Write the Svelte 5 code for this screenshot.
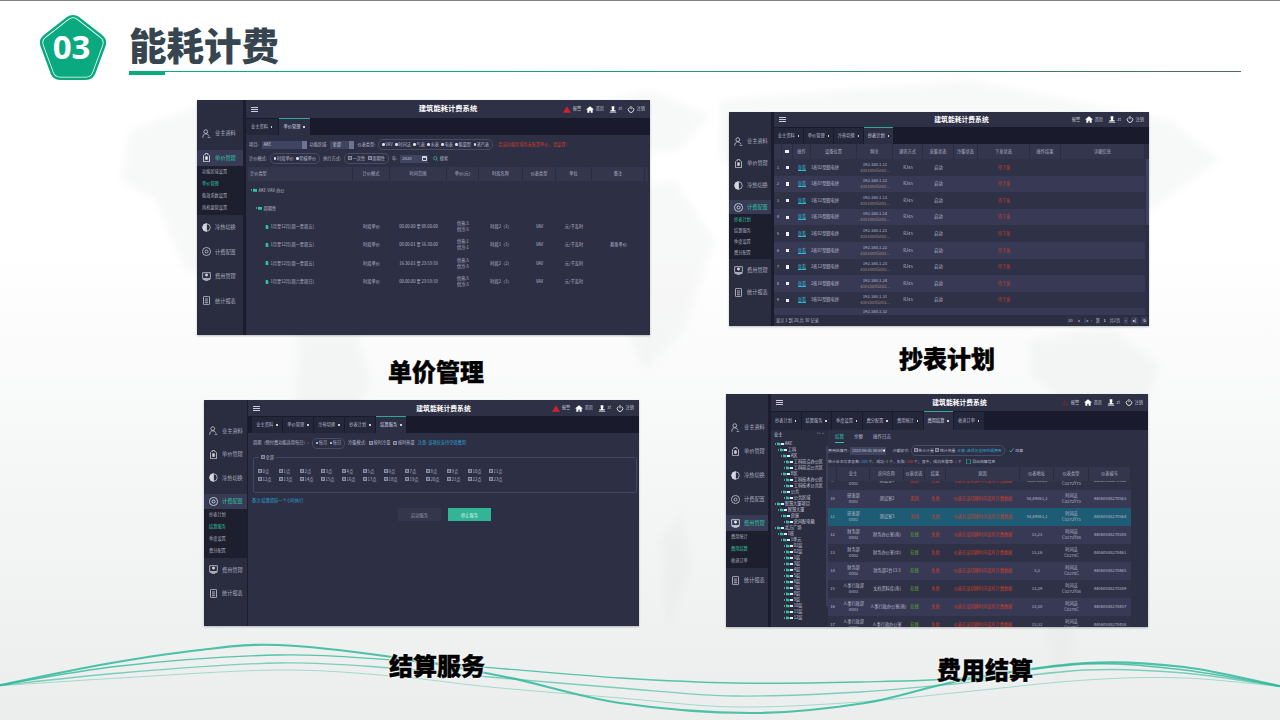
<script>
  const navLabels = [
    ["user", "业主资料"],
    ["meter", "单价管理"],
    ["half", "冷热切换"],
    ["gear", "计费配置"],
    ["screen", "费用管理"],
    ["doc", "统计报表"],
  ];

  const priceWin = {
    cls: "win-price",
    active: 1,
    subs: ["功能区域设置", "单价管理", "能效系数设置", "风机盘管设置"],
    subOn: 1,
    alarm: "#d3202e",
    tabs: ["业主资料", "单价管理"],
    tabOn: 1,
  };
  const meterWin = {
    cls: "win-meter",
    active: 3,
    subs: ["抄表计划", "结算服务", "季度设置", "费分配置"],
    subOn: 0,
    alarm: "transparent",
    tabs: ["业主资料", "单价管理", "冷热切换", "抄表计划"],
    tabOn: 3,
  };
  const settleWin = {
    cls: "win-settle",
    active: 3,
    subs: ["抄表计划", "结算服务", "季度设置", "费分配置"],
    subOn: 1,
    alarm: "#d3202e",
    tabs: ["业主资料", "单价管理", "冷热切换", "抄表计划", "结算服务"],
    tabOn: 4,
  };
  const feeWin = {
    cls: "win-fee",
    active: 4,
    subs: ["费用统计", "费用结算", "收退订单"],
    subOn: 1,
    alarm: "#4a2f3d",
    tabs: ["抄表计划", "结算服务", "季度设置", "费分配置", "费用统计", "费用结算", "收退订单"],
    tabOn: 5,
  };

  const priceHead = ["计价类型", "计价模式", "时间范围", "单价(元)", "时段名称", "仪表类型", "单位", "备注"];
  const priceRows = [
    ["1月至12月[周一至周五]", "00:00:00 至 08:00:00", "供热:5", "供冷:5", "时段2（1）", ""],
    ["1月至12月[周一至周五]", "08:00:01 至 16:30:00", "供热:1", "供冷:1", "时段1（1）", "基准单价"],
    ["1月至12月[周一至周五]", "16:30:01 至 23:59:59", "供热:5", "供冷:5", "时段2（2）", ""],
    ["1月至12月[周六至周日]", "00:00:00 至 23:59:59", "供热:5", "供冷:5", "时段2（1）", ""],
  ];

  const meterHead = ["操作", "设备位置", "网关", "通讯方式", "采暖状态", "冷暖状态", "下发状态", "操作结果", "详细信息"];
  const meterRows = [
    ["1栋02型圆电拼", "192.168.1.11", "4301000G001..."],
    ["1栋07型圆电拼", "192.168.1.12", "4301000G001..."],
    ["1栋12型圆电拼", "192.168.1.13", "4301000G001..."],
    ["1栋16型圆电拼", "192.168.1.14", "4301000G001..."],
    ["2栋02型圆电拼", "192.168.1.21", "4301000G002..."],
    ["2栋07型圆电拼", "192.168.1.22", "4301000G002..."],
    ["2栋12型圆电拼", "192.168.1.23", "4301000G002..."],
    ["2栋16型圆电拼", "192.168.1.24", "4301000G002..."],
    ["3栋02型圆电拼", "192.168.1.31", "4301000G003..."],
  ];

  const hours = Array.from({ length: 24 }, (_, i) => i + "点");

  const tree = [
    [0, "AKE"], [1, "工科"], [2, "A区"], [3, "工科前沿办公区"], [3, "工科前沿公共区"],
    [2, "B区"], [3, "工科技术办公区"], [3, "工科技术公共区"], [2, "公共"], [3, "公共区域"],
    [0, "智慧大厦项目"], [1, "智慧大厦"], [2, "房屋"], [3, "房间配电箱"], [0, "北方广场"],
    [1, "1栋"], [2, "1单元"], [3, "01层"], [3, "02层"], [3, "1层"], [3, "3层"], [3, "4层"],
    [3, "5层"], [3, "6层"], [3, "7层"], [3, "8层"], [3, "9层"], [3, "10层"], [3, "11层"], [3, "12层"],
  ];

  const feeHead = ["", "业主", "房间名称", "仪表状态", "结果", "原因", "仪表地址", "仪表类型", "仪表编号"];
  const reason = "仪表在该切换时内没有计费数据";
  const feeRows = [
    [9, "研发部", "0001", "测试室1", "离线", "54,49063,1", "C0272Y73", "44060588270562"],
    [10, "研发部", "0001", "测试室2", "离线", "54,49061,1", "C0272Y73", "44060588270563"],
    [11, "研发部", "0001", "测试室3", "离线", "54,49061,1", "C0272Y73", "44060588270564"],
    [12, "财务部", "0002", "财务办公室(南)", "在线", "13,23", "C0272Y08", "44060588270340"],
    [13, "财务部", "0002", "财务办公室(中)", "在线", "13,16", "C0278C", "44060588270461"],
    [14, "财务部", "0002", "财务部2台13.3", "在线", "3,3", "C0278C", "44060588270465"],
    [15, "人事行政部", "0003", "文档资料库(南)", "在线", "13,39", "C0272Y08", "44060588270349"],
    [16, "人事行政部", "0003", "人事行政办公室(南)", "在线", "13,30", "C0278C", "44060588270457"],
    [17, "人事行政部", "0003", "人事行政办公室", "在线", "13,32", "C0278C", "44060588270458"],
  ];

  // wave centre lines, read off the reference, smoothed with catmull-rom
  const waves = [
    { w: 2.2, o: 0.85, p: [[-4, 686], [100, 665], [200, 650], [278, 645], [392, 657], [506, 677], [620, 703], [751, 713], [865, 703], [963, 680], [1086, 663], [1184, 667], [1284, 687]] },
    { w: 1.4, o: 0.8, p: [[-4, 686], [120, 666], [278, 655], [392, 660], [506, 669], [620, 678], [735, 683], [860, 682], [963, 678], [1086, 664], [1184, 670], [1284, 687]] },
    { w: 1.3, o: 0.6, p: [[-4, 686], [120, 673], [278, 663], [392, 668], [490, 677], [620, 688], [735, 696], [860, 692], [963, 683], [1086, 670], [1184, 673], [1284, 687]] },
    { w: 1, o: 0.4, p: [[-4, 686], [120, 678], [278, 670], [392, 676], [490, 687], [620, 698], [735, 707], [860, 702], [963, 692], [1086, 680], [1184, 678], [1284, 687]] },
  ];

  function smooth(p) {
    let d = `M${p[0][0]} ${p[0][1]}`;
    for (let i = 0; i < p.length - 1; i++) {
      const a = p[Math.max(i - 1, 0)], b = p[i], c = p[i + 1], e = p[Math.min(i + 2, p.length - 1)];
      d += `C${b[0] + (c[0] - a[0]) / 6} ${b[1] + (c[1] - a[1]) / 6} ${c[0] - (e[0] - b[0]) / 6} ${c[1] - (e[1] - b[1]) / 6} ${c[0]} ${c[1]}`;
    }
    return d;
  }

  const pentagon = "M34 10L57 28 47 55H21L11 28z";
</script>

{#snippet icon(name)}
  <svg class="nav-icon" viewBox="0 0 24 24" fill="none" stroke="currentColor" stroke-width="2">
    {#if name === "user"}
      <circle cx="10" cy="7" r="5" />
      <path d="M2 23c0-7 3-10 8-10s7 2 8 5M15 22h7" />
    {:else if name === "meter"}
      <path d="M9 1h6v3h2l3 3v16H4V7l3-3h2z" />
      <rect x="10" y="10" width="4" height="7" fill="currentColor" />
    {:else if name === "half"}
      <circle cx="12" cy="12" r="10" />
      <path d="M12 2a10 10 0 0 0 0 20z" fill="currentColor" />
    {:else if name === "gear"}
      <path d="M12 1l8 3 3 8-3 8-8 3-8-3-3-8 3-8z" />
      <circle cx="12" cy="12" r="4" />
    {:else if name === "screen"}
      <rect x="2" y="2" width="20" height="15" />
      <path d="M2 20h20M7 23h10" />
      <circle cx="12" cy="8" r="3" fill="currentColor" />
    {:else}
      <rect x="4" y="1" width="16" height="22" rx="2" />
      <path d="M8 8h8M8 13h8M8 18h8" />
    {/if}
  </svg>
{/snippet}

{#snippet treeMark(arrow, doc)}
  {#if arrow}<span class="arrow"></span>{/if}
  {#if doc}
    <svg class="mark" viewBox="0 0 10 12"><path d="M1 0h6l2 3v9H1z" fill="#2fc3a5" /></svg>
  {:else}
    <svg class="mark" viewBox="0 0 12 10"><path d="M0 1h5l1 1h6v8H0z" fill="#2fc3a5" /></svg>
  {/if}
{/snippet}

{#snippet shell(win, body)}
  <section class="win {win.cls}">
    <nav class="side">
      {#each navLabels as [name, label], i}
        <div class="nav-item" class:on={i === win.active}>
          {@render icon(name)}<span>{label}</span>
        </div>
        {#if i === win.active}
          <div class="subs">
            {#each win.subs as sub, k}
              <div class="sub" class:teal={k === win.subOn}>{sub}</div>
            {/each}
          </div>
        {/if}
      {/each}
    </nav>
    <div class="main">
      <header class="topbar">
        <div class="burger"><i></i><i></i><i></i></div>
        <h2>建筑能耗计费系统</h2>
        <div class="tools">
          <svg viewBox="0 0 12 10"><path d="M6 0l6 10H0z" fill={win.alarm} /></svg><span>报警</span>
          <svg viewBox="0 0 12 10"><path d="M6 0l6 5h-2v5H7V7H5v3H2V5H0z" fill="#fff" /></svg><span>首页</span>
          <svg viewBox="0 0 12 10"><path d="M4 0h4v4l-1 2h3v2H2V6h3L4 4zM1 9h10v1H1z" fill="#fff" /></svg><span>zt</span>
          <svg viewBox="0 0 12 12" fill="none" stroke="#fff" stroke-width="1.4"><path d="M3.4 2.6a4.6 4.6 0 1 0 5.2 0M6 0v5.5" /></svg><span>注销</span>
        </div>
      </header>
      <div class="tabs">
        {#each win.tabs as tab, i}
          <div class="tab" class:on={i === win.tabOn}>{tab}<b></b></div>
        {/each}
      </div>
      <div class="content">{@render body()}</div>
    </div>
  </section>
{/snippet}

{#snippet priceBody()}
  <div class="form-row row-one">
    <span>项目:</span>
    <span class="select wide">AKE<b></b></span>
    <span>功能区域:</span>
    <span class="select">全部<b></b></span>
    <span>仪表类型:</span>
    <span class="pill">
      {#each ["VAV", "时间法", "气表", "水表", "电表", "能量型", "蒸汽表"] as t}<span class="radio">{t}</span>{/each}
    </span>
    <span class="warn">若该功能区域尚未配置单价，请设置!</span>
  </div>
  <div class="form-row row-two">
    <span>计价模式:</span>
    <span class="pill"><span class="radio">时段单价</span><span class="radio">阶梯单价</span></span>
    <span>执行方式:</span>
    <span class="pill"><span class="box">一次性</span><span class="box">周期性</span></span>
    <span>年:</span>
    <span class="select year">2020<svg viewBox="0 0 10 10"><path d="M1 1h8v8H1z" fill="none" stroke="#fff" stroke-width="1.5" /><path d="M1 3h8" stroke="#fff" stroke-width="1.5" /></svg></span>
    <span class="search"><svg viewBox="0 0 10 10" fill="none" stroke="#2fc3a5" stroke-width="1.4"><circle cx="4.5" cy="4.5" r="3.4" /><path d="M7 7l2.5 2.5" /></svg>搜索</span>
  </div>
  <div class="grid price-grid head">
    {#each priceHead as h, i}<div class:left={i === 0}>{h}</div>{/each}
  </div>
  <div class="tree-row lvl-one">{@render treeMark(true, false)}AKE-VAV-办公</div>
  <div class="tree-row lvl-two">{@render treeMark(true, false)}周期性</div>
  {#each priceRows as r}
    <div class="grid price-grid price-row">
      <div class="left lvl-three">{@render treeMark(false, true)}{r[0]}</div>
      <div>时段单价</div>
      <div>{r[1]}</div>
      <div class="two-line"><span>{r[2]}</span><span>{r[3]}</span></div>
      <div>{r[4]}</div>
      <div>VAV</div>
      <div>元/千瓦时</div>
      <div>{r[5]}</div>
    </div>
  {/each}
{/snippet}

{#snippet meterBody()}
  <div class="meter-wrap">
    <div class="grid meter-grid head">
      <div></div>
      <div><span class="check"></span></div>
      {#each meterHead as h}<div>{h}</div>{/each}
    </div>
    <div class="meter-rows">
      {#each meterRows as r, i}
        <div class="grid meter-grid meter-row" class:alt={i % 2 === 1}>
          <div>{i + 1}</div>
          <div><span class="check"></span></div>
          <div><span class="link">查看</span></div>
          <div class="left">{r[0]}</div>
          <div class="two-line"><span>{r[1]}</span><span class="rust">{r[2]}</span></div>
          <div>RJ45</div>
          <div>启动</div>
          <div></div>
          <div class="red">待下发</div>
          <div></div>
          <div></div>
        </div>
      {/each}
      <!-- next row is only just peeking out above the pager -->
      <div class="grid meter-grid meter-row alt peek">
        <div></div><div></div><div></div><div></div>
        <div>192.168.1.32</div>
      </div>
    </div>
    <footer class="pager">
      <span>显示 1 到 20,共 30 记录</span>
      <div class="pages">
        <span class="select size">20<b></b></span>
        <span>|◂</span><span>‹</span><span>第</span><span class="num">1</span><span>共2页</span>
        <span class="btn">›</span><span class="btn">▸|</span><span class="btn">↻</span>
      </div>
    </footer>
  </div>
{/snippet}

{#snippet settleBody()}
  <div class="settle">
    <div class="form-row settle-row">
      <span>周期（预付费功能适用每日）:</span>
      <span class="pill"><span class="radio">每月</span><span class="radio">每日</span></span>
      <span>冷暖模式:</span>
      <span class="box">按时冷量</span>
      <span class="box">按时热量</span>
      <span class="note">注意: 该项仅支持空调费用</span>
    </div>
    <fieldset>
      <legend><span class="box">全部</span></legend>
      <div class="hours">
        {#each hours as h}<span class="box">{h}</span>{/each}
      </div>
    </fieldset>
    <p class="note remark">备注:结算提前一个小时执行</p>
    <div class="actions">
      <button class="ghost">启动服务</button>
      <button class="solid">停止服务</button>
    </div>
  </div>
{/snippet}

{#snippet feeBody()}
  <div class="fee">
    <aside class="tree">
      <div class="tree-head"><span>业主</span><span class="dots">▾ ▴ ◂</span></div>
      <div class="tree-list">
        {#each tree as [lvl, label]}
          <div class="tree-item lvl{lvl}"><span class="arrow"></span><svg class="mark" viewBox="0 0 12 10"><path d="M0 1h5l1 1h6v8H0z" fill="#2fc3a5" /></svg><span class="white"></span>{label}</div>
        {/each}
      </div>
      <div class="tree-thumb"></div>
    </aside>
    <div class="fee-main">
      <div class="subtabs">
        <span class="teal under">结算</span><span>余额</span><span>操作日志</span>
      </div>
      <div class="form-row fee-row">
        <span>费用结算月:</span>
        <span class="select month">2020-06-01 00:00<svg viewBox="0 0 10 10"><path d="M1 1h8v8H1z" fill="#fff" /></svg></span>
        <span class="after-month">冷暖模式:</span>
        <span class="pill"><span class="box">统计冷量</span><span class="box">统计热量</span><span class="note">注意: 该项仅支持空调费用</span></span>
        <span class="settle-btn"><svg viewBox="0 0 10 10" fill="none" stroke="#2fc3a5" stroke-width="1.6"><path d="M1 5l3 3 5-7" /></svg>结算</span>
      </div>
      <div class="form-row fee-row">
        <span>统计业主仪表总数: <i class="blue">100</i> 个，成功: <i class="green">0</i> 个，失败: <i class="red">100</i> 个；其中，成功告警等: <i class="red">1</i> 个</span>
        <span class="export"><svg viewBox="0 0 10 10"><path d="M1 0h6l2 2v8H1z" fill="none" stroke="#2fc3a5" stroke-width="1.2" /></svg>导出结算信息</span>
      </div>
      <div class="grid fee-grid head">
        {#each feeHead as h}<div>{h}</div>{/each}
      </div>
      <div class="fee-rows">
        {#each feeRows as r, i}
          <div class="grid fee-grid fee-line" class:alt={i % 2 === 1} class:picked={r[0] === 11}>
            <div>{r[0]}</div>
            <div class="two-line"><span>{r[1]}</span><span>{r[2]}</span></div>
            <div>{r[3]}</div>
            <div class={r[4] === "在线" ? "green" : "red"}>{r[4]}</div>
            <div class="red">失败</div>
            <div class="red">{reason}</div>
            <div>{r[5]}</div>
            <div class="two-line"><span>时间法</span><span>{r[6]}</span></div>
            <div>{r[7]}</div>
          </div>
        {/each}
      </div>
    </div>
  </div>
{/snippet}

<main class="slide">
  <svg class="map" viewBox="0 0 1280 720">
    <path d="M130 130l70-25 90 10 40 40-40 50-50 15-20 60-35-10-30-70-35-20zM300 300l55 20 15 60-30 80-25 30-20-90z" />
    <path d="M560 110l90-20 60 25-30 35-80 10zM590 190l85-10 40 60-30 90-40 40-40-80-25-50z" />
    <path d="M720 100l250-20 200 40 50 40-70 50-50 60-60-30-60 20-50-40-90 0-120-60z" />
    <path d="M1030 340l80-15 50 40-20 50-70-10-40-30z" />
    <path d="M200 560l40-40 15 60-35 50zM660 540l22-30 10 60-25 60zM1040 600l25-20 12 70-20 40z" />
  </svg>
  <svg class="waves" viewBox="0 0 1280 720" fill="none">
    {#each waves as wave}
      <path d={smooth(wave.p)} stroke="#2fb89a" stroke-width={wave.w} stroke-opacity={wave.o} />
    {/each}
  </svg>

  <header class="hero">
    <div class="badge">
      <svg viewBox="0 0 68 66" stroke-linejoin="round">
        <path d={pentagon} fill="#0aa97f" stroke="#0aa97f" stroke-width="20" />
        <path d={pentagon} fill="#fff" stroke="#fff" stroke-width="15" />
        <path d={pentagon} fill="#0aa97f" stroke="#0aa97f" stroke-width="13.500" />
      </svg>
      <span>03</span>
    </div>
    <div class="hero-text">
      <h1>能耗计费</h1>
      <div class="rule"><i></i></div>
    </div>
  </header>

  {@render shell(priceWin, priceBody)}
  {@render shell(meterWin, meterBody)}
  {@render shell(settleWin, settleBody)}
  {@render shell(feeWin, feeBody)}

  <div class="caption cap-price">单价管理</div>
  <div class="caption cap-meter">抄表计划</div>
  <div class="caption cap-settle">结算服务</div>
  <div class="caption cap-fee">费用结算</div>
</main>

<style>
  :global(body) {
    margin: 0;
    background: #fff;
  }

  .slide {
    position: relative;
    width: 1280px;
    height: 720px;
    overflow: hidden;
    box-sizing: border-box;
    border-top: 1px solid #808080;
    background: linear-gradient(180deg, #fff 0%, #fff 35%, #f4f5f5 70%, #eceeee 100%);
    font-family: "Noto Sans CJK SC", "Liberation Sans", sans-serif;
  }

  .map {
    position: absolute;
    top: -1px;
    left: 0;
    width: 1280px;
    height: 720px;
    fill: #dfe2e2;
    opacity: 0.22;
    filter: blur(3px);
  }

  .waves {
    position: absolute;
    top: -1px;
    left: 0;
    width: 1280px;
    height: 720px;
  }

  .hero {
    position: relative;
    display: flex;
    box-sizing: border-box;
    height: 80px;
    padding: 14px 39px 0 39px;
  }

  .badge {
    position: relative;
    display: flex;
    align-items: center;
    justify-content: center;
    width: 68px;
    height: 66px;
  }

  .badge svg {
    position: absolute;
    inset: 0;
    width: 68px;
    height: 66px;
  }

  .badge span {
    position: relative;
    margin: 0 3px 3px 0;
    color: #fff;
    font: 700 33px "Open Sans", sans-serif;
    line-height: 1;
  }

  .hero-text {
    flex: 1;
    margin-left: 22px;
  }

  .hero-text h1 {
    margin: 0;
    height: 56px;
    color: #36454f;
    font-size: 37.500px;
    font-weight: 900;
    line-height: 58px;
  }

  .rule {
    height: 1px;
    background: linear-gradient(90deg, #0aa97f 0%, #0aa97f 30%, #4f6a66 100%);
  }

  .rule i {
    display: block;
    width: 36px;
    height: 4px;
    background: #0aa97f;
  }

  .caption {
    position: absolute;
    color: #000;
    font-size: 24px;
    font-weight: 900;
    line-height: 30px;
    -webkit-text-stroke: 0.4px #000;
    text-shadow: 0 0 3px #fff, 0 0 3px #fff;
  }

  .cap-price { left: 388px; top: 355px; }
  .cap-meter { left: 899px; top: 342px; }
  .cap-settle { left: 389px; top: 649px; }
  .cap-fee { left: 937px; top: 653px; }

  /* app windows sit on the slide as free pictures */
  .win {
    position: absolute;
    display: flex;
    overflow: hidden;
    background: #2d2f45;
    color: #b8bbcb;
    font-size: 4.2px;
    line-height: 1.25;
    box-shadow: 0 1px 2px rgba(0, 0, 0, 0.25);
  }

  .win-price {
    left: 197px; top: 99px; width: 453px; height: 235px;
    --side: 46px; --gap: 3px; --bar: 18px; --tabbar: 17px; --tab: 31.500px; --tab-lead: 0px;
    --pad: 21px; --nav: 24.5px; --sub: 12px; --title: 7.3px;
  }
  .win-meter {
    left: 729px; top: 111px; width: 420px; height: 214px;
    --side: 42px; --gap: 3px; --bar: 15px; --tabbar: 17px; --tab: 29px; --tab-lead: 0px;
    --pad: 18px; --nav: 22px; --sub: 11px; --title: 6.8px;
  }
  .win-settle {
    left: 204px; top: 399px; width: 435px; height: 226px;
    --side: 43px; --gap: 1px; --bar: 16px; --tabbar: 17px; --tab: 30px; --tab-lead: 4px;
    --pad: 19px; --nav: 23.5px; --sub: 12px; --title: 6.8px;
  }
  .win-fee {
    left: 726px; top: 393px; width: 422px; height: 233px;
    --side: 42px; --gap: 3px; --bar: 17px; --tabbar: 19px; --tab: 29.500px; --tab-lead: 0px;
    --pad: 21px; --nav: 24px; --sub: 12px; --title: 6.8px;
  }

  .side {
    flex: none;
    box-sizing: border-box;
    width: calc(var(--side) + var(--gap));
    padding-top: var(--pad);
    border-right: var(--gap) solid #1b1d2f;
    background: #2a2c40;
  }

  .nav-item {
    display: flex;
    align-items: center;
    box-sizing: border-box;
    height: var(--nav);
    padding-left: 5px;
    color: #a9acbc;
    font-size: 5.200px;
  }

  .nav-item.on {
    height: calc(var(--nav) - 8px);
    margin-top: 4px;
    background: #383b55;
    color: #2fc3a5;
  }

  .nav-icon {
    width: 9px;
    height: 9px;
    margin-right: 4px;
    color: #d4d6df;
  }

  .nav-item.on .nav-icon {
    color: #e8f2f2;
  }

  .subs {
    padding-bottom: 1px;
    background: #1e1f2e;
  }

  .sub {
    display: flex;
    align-items: center;
    height: var(--sub);
    padding-left: 5px;
    color: #a9acbc;
  }

  .teal {
    color: #2fc3a5;
  }

  .main {
    display: flex;
    flex: 1;
    flex-direction: column;
    min-width: 0;
  }

  .topbar {
    position: relative;
    display: flex;
    flex: none;
    align-items: center;
    justify-content: space-between;
    height: var(--bar);
    padding: 0 5px;
    background: #2e3046;
  }

  .topbar h2 {
    position: absolute;
    left: 0;
    right: 0;
    margin: 0;
    color: #fff;
    font-size: var(--title);
    font-weight: 700;
    text-align: center;
  }

  .burger i {
    display: block;
    width: 6.500px;
    height: 0.7px;
    margin: 1.400px 0;
    background: #ccd;
  }

  .tools {
    display: flex;
    align-items: center;
    color: #c4c6d2;
    font-size: 4.2px;
  }

  .tools svg {
    width: 8px;
    height: 7px;
    margin: 0 1.500px 0 5px;
  }

  .tabs {
    display: flex;
    flex: none;
    gap: 1px;
    height: var(--tabbar);
    padding-left: var(--tab-lead);
    background: #191b2c;
  }

  .tab {
    display: flex;
    align-items: center;
    justify-content: center;
    gap: 3px;
    width: var(--tab);
    margin-top: 1px;
    background: #24263a;
  }

  .tab b {
    width: 1.500px;
    height: 1.500px;
    background: #ccd;
  }

  .tab.on {
    margin-top: 0;
    border-top: 1px solid #2fa898;
    background: #2d2f45;
    color: #d5d7e0;
  }

  .content {
    flex: 1;
    min-height: 0;
    overflow: hidden;
  }

  .form-row {
    display: flex;
    align-items: center;
    gap: 3px;
    white-space: nowrap;
  }

  .row-one {
    height: 19px;
    padding: 0 3px;
  }

  .row-two {
    height: 13px;
    padding: 0 3px;
    margin: -2px 0 2px;
  }

  .select {
    display: flex;
    align-items: center;
    justify-content: space-between;
    box-sizing: border-box;
    width: 24px;
    height: 8px;
    padding-left: 2px;
    background: #3f4560;
    color: #ccd;
  }

  .select.wide {
    width: 45px;
  }

  .select b {
    width: 5px;
    height: 8px;
    background: #6e7390;
  }

  .select.year {
    width: 28px;
    padding-right: 1px;
  }

  .select svg {
    width: 5px;
    height: 5px;
  }

  .pill {
    display: flex;
    align-items: center;
    gap: 2.500px;
    height: 9px;
    padding: 0 3px;
    border: 0.6px solid #484b66;
    border-radius: 5px;
  }

  .radio::before {
    content: "";
    display: inline-block;
    width: 2.500px;
    height: 2.500px;
    margin-right: 0.6px;
    border-radius: 50%;
    background: #dde;
  }

  .box::before {
    content: "";
    display: inline-block;
    width: 2px;
    height: 2px;
    margin-right: 0.6px;
    border: 0.3px solid #8a8da0;
    background: #5a5d75;
    vertical-align: -0.2px;
  }

  .warn {
    margin-left: 2px;
    color: #c8402c;
  }

  .search {
    display: flex;
    align-items: center;
    gap: 1.500px;
    margin-left: 2px;
  }

  .search svg {
    width: 5px;
    height: 5px;
  }

  .grid {
    display: grid;
    align-items: center;
    text-align: center;
    white-space: nowrap;
  }

  .head {
    background: #34364d;
    color: #b0b3c3;
  }

  .head > div {
    align-self: stretch;
    display: flex;
    align-items: center;
    justify-content: center;
    border-right: 0.5px solid #2a2c40;
  }

  .head > div.left {
    justify-content: flex-start;
    padding-left: 2px;
  }

  .left {
    text-align: left;
  }

  .two-line {
    display: flex;
    flex-direction: column;
    gap: 0.8px;
  }

  .price-grid {
    grid-template-columns: 105px 37px 57px 32px 44px 33px 36px 53px;
    margin: 0 2px;
  }

  .price-grid.head {
    height: 14px;
  }

  .price-row {
    height: 18.3px;
  }

  .tree-row {
    display: flex;
    align-items: center;
    height: 18.3px;
  }

  .lvl-one { padding-left: 5px; }
  .lvl-two { padding-left: 10px; }
  .lvl-three { padding-left: 17px; }

  .arrow {
    display: inline-block;
    width: 0;
    height: 0;
    margin-right: 1px;
    border-top: 1.2px solid transparent;
    border-bottom: 1.2px solid transparent;
    border-left: 1.8px solid #dde;
  }

  .mark {
    width: 4px;
    height: 4px;
    margin-right: 1.500px;
    vertical-align: -0.5px;
  }

  .meter-wrap {
    display: flex;
    flex-direction: column;
    height: 100%;
    position: relative;
  }

  .meter-wrap::after {
    content: "";
    position: absolute;
    right: 0;
    top: 15px;
    width: 3px;
    height: 66px;
    background: #40435e;
  }

  .meter-grid {
    grid-template-columns: 8px 11px 18px 46px 36px 30px 31px 24px 52px 31px 84px;
  }

  .meter-grid.head {
    flex: none;
    height: 15px;
    margin-right: 4px;
  }

  .meter-rows {
    flex: 1;
    min-height: 0;
    overflow: hidden;
  }

  .meter-row {
    height: 16.600px;
    background: #2f3146;
    margin-right: 4px;
  }

  .meter-row.alt {
    background: #383a55;
  }

  .meter-row.peek {
    align-items: start;
    height: 6.400px;
    padding-top: 1px;
    box-sizing: border-box;
  }

  .check {
    display: inline-block;
    width: 3.500px;
    height: 3.500px;
    background: #eef;
    vertical-align: middle;
  }

  .link {
    border-bottom: 0.5px solid #2fb8d0;
    color: #2fb8d0;
  }

  .rust {
    color: #a98d80;
  }

  .red {
    color: #c8402c;
  }

  .green {
    color: #5fb536;
  }

  .blue {
    color: #2fa6d6;
  }

  i.red, i.green, i.blue {
    font-style: normal;
  }

  .pager {
    display: flex;
    flex: none;
    align-items: center;
    justify-content: space-between;
    height: 11px;
    padding: 0 2px;
    background: #2b2d42;
  }

  .pages {
    display: flex;
    align-items: center;
    gap: 3.500px;
  }

  .select.size {
    width: 15px;
    height: 9px;
    background: #2e3046;
    padding-right: 1px;
  }

  .select.size b {
    width: 2px;
    height: 2px;
  }

  .num {
    color: #fff;
  }

  .btn {
    padding: 1px 1.500px;
    background: #3a3d58;
    color: #fff;
  }

  .settle {
    padding: 0 2px 0 5px;
  }

  .settle-row {
    height: 20px;
  }

  .note {
    color: #2fa6d6;
  }

  fieldset {
    box-sizing: border-box;
    height: 38px;
    margin: 2px 0 0;
    padding: 9px 4px 0;
    border: 0.6px solid #434660;
    border-radius: 2px;
  }

  legend {
    padding: 0 2px;
    margin-left: 1px;
  }

  .hours {
    display: grid;
    grid-template-columns: repeat(12, 21px);
    row-gap: 2.500px;
  }

  .remark {
    margin: 5px 0 0 -1px;
    line-height: 5px;
  }

  .actions {
    display: flex;
    gap: 7px;
    margin: 5px 0 0 145px;
  }

  .actions button {
    width: 43px;
    height: 13px;
    padding: 0;
    border: 0;
    font: 4.200px "Noto Sans CJK SC", sans-serif;
  }

  .ghost {
    background: #34364d;
    color: #999cad;
  }

  .solid {
    background: #32b596;
    color: #d9f4ec;
  }

  .fee {
    display: flex;
    height: 100%;
    padding-left: 2px;
  }

  .tree {
    position: relative;
    flex: none;
    width: 55px;
    overflow: hidden;
    background: #2a2c40;
  }

  .tree-head {
    display: flex;
    justify-content: space-between;
    height: 10px;
    padding: 2px 4px 0 1px;
    box-sizing: border-box;
    color: #d5d7e0;
  }

  .dots {
    font-size: 3px;
    color: #7a7d90;
  }

  .tree-list {
    padding-top: 1px;
  }

  .tree-item {
    display: flex;
    align-items: center;
    height: 6px;
    white-space: nowrap;
    color: #ccd;
  }

  .lvl0 { padding-left: 2px; }
  .lvl1 { padding-left: 5px; }
  .lvl2 { padding-left: 8px; }
  .lvl3 { padding-left: 11px; }

  .tree-item .mark {
    width: 3.500px;
    height: 3.500px;
    margin-right: 0.8px;
  }

  .white {
    width: 2.400px;
    height: 2.400px;
    margin-right: 1px;
    background: #e8e8ef;
  }

  .tree-thumb {
    position: absolute;
    right: 0;
    top: 16px;
    width: 2px;
    height: 160px;
    background: #3b3e58;
  }

  .fee-main {
    flex: 1;
    min-width: 0;
  }

  .subtabs {
    display: flex;
    gap: 10px;
    height: 15px;
    padding: 4px 0 0 7px;
    box-sizing: border-box;
    font-size: 4.500px;
  }

  .under {
    height: 8px;
    border-bottom: 0.8px solid #2fc3a5;
  }

  .fee-row {
    height: 11px;
    gap: 1.500px;
    font-size: 3.900px;
  }

  .select.month {
    width: 36px;
    height: 8px;
    padding-right: 1px;
  }

  .after-month {
    margin-left: 5px;
  }

  .fee-row .pill {
    gap: 1.500px;
    padding: 0 2px;
  }

  .settle-btn,
  .export {
    display: flex;
    align-items: center;
    gap: 1px;
    margin-left: 3px;
  }

  .settle-btn svg,
  .export svg {
    width: 5px;
    height: 5px;
  }

  .fee-grid {
    grid-template-columns: 9px 33px 34px 21px 21px 74px 34px 35px 42px;
    width: 303px;
  }

  .fee-grid.head {
    height: 14px;
  }

  .fee-rows {
    height: 200px;
    overflow: hidden;
  }

  .fee-line {
    height: 18px;
    background: #2f3146;
  }

  .fee-line:first-child {
    margin-top: -9px;
  }

  .fee-line.alt {
    background: #383a55;
  }

  .fee-line.picked {
    background: #1e5b74;
  }

  .fee-line .two-line {
    white-space: normal;
  }
</style>
